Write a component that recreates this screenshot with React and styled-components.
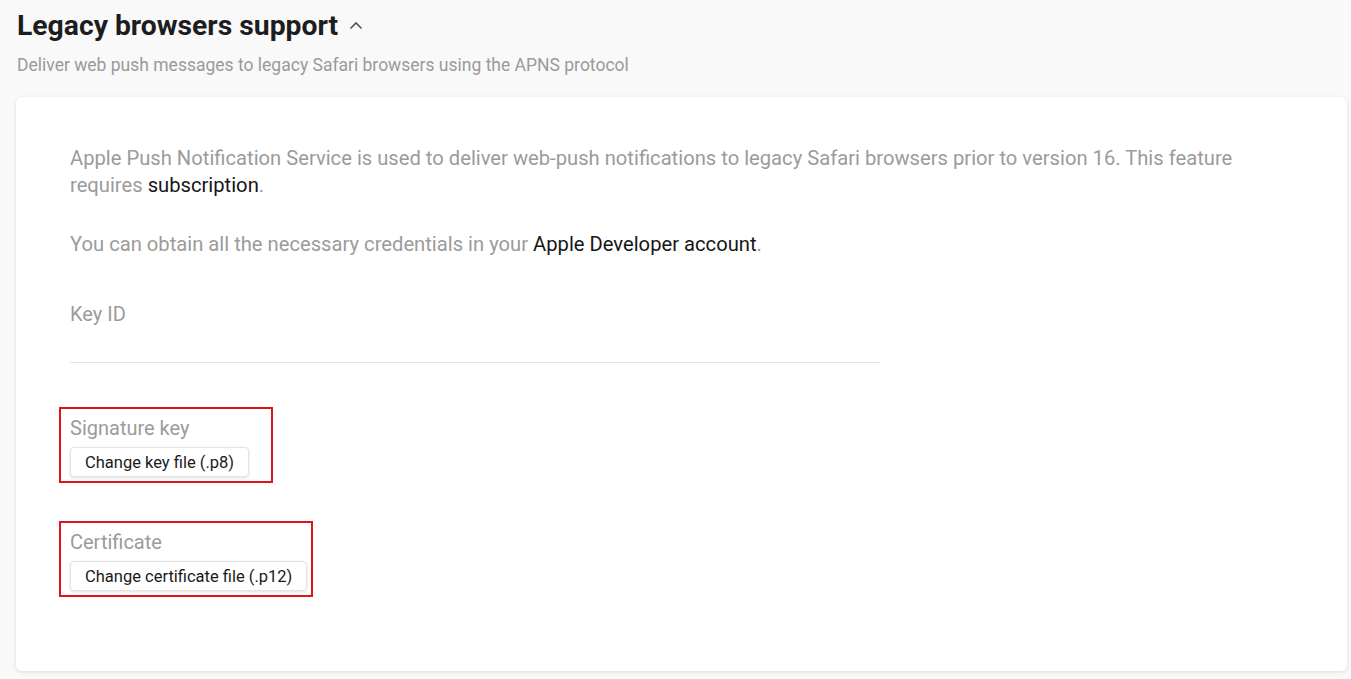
import styled, { createGlobalStyle } from 'styled-components';

const GlobalStyle = createGlobalStyle`
    body {
        margin: 0;
        background: #f9f9f9;
        font-family: Roboto, "Noto Sans", sans-serif;
    }
`

const Page = styled.div`
    padding: 10px 4px 8px 16px;
`

const Header = styled.div`
    display: flex;
    align-items: center;
    gap: 10px;
    padding-left: 1px;
`

const Title = styled.h1`
    margin: 0;
    font-size: 28.3px;
    line-height: 32px;
    font-weight: 700;
    color: #1d1d1f;
`

const Subtitle = styled.p`
    margin: 12px 0 0 1px;
    font-size: 17.5px;
    line-height: 22px;
    color: #9a9a9a;
`

const Card = styled.div`
    margin-top: 21px;
    background: #fff;
    border-radius: 6px;
    box-shadow: 0 1px 4px rgba(0, 0, 0, 0.12);
    padding: 48px 54px 74px 54px;
`

const Text = styled.p`
    margin: 0 0 32px 0;
    max-width: 1180px;
    font-size: 20.2px;
    line-height: 27px;
    color: #9b9b9b;
`

const Link = styled.span`
    color: #161616;
`

const Field = styled.div`
    width: 810px;
    margin-top: 44px;
`

const Label = styled.div`
    font-size: 20px;
    line-height: 24px;
    color: #9b9b9b;
`

const Input = styled.div`
    height: 36px;
    border-bottom: 1px solid #e2e2e2;
`

const Marked = styled.div`
    display: inline-flex;
    flex-direction: column;
    align-items: flex-start;
    gap: 7px;
    margin: ${p => p.$top}px 0 0 -11px;
    padding: 7px ${p => p.$right}px 4px 9px;
    border: 2px solid #e0131a;
`

const FileButton = styled.button`
    font-family: Roboto, "Noto Sans", sans-serif;
    font-size: 16.5px;
    color: #1a1a1a;
    background: #fff;
    border: 1px solid #e4e4e4;
    border-radius: 4px;
    box-shadow: 0 1px 3px rgba(0, 0, 0, 0.12);
    height: 30px;
    padding: 0 14px;
`

const Column = styled.div`
    display: flex;
    flex-direction: column;
    align-items: flex-start;
`

function Chevron() {
    return (
        <svg width="16" height="16" viewBox="0 0 16 16" fill="none">
            <path d="M2.5 10.5 L8 5 L13.5 10.5" stroke="#555" strokeWidth="1.6" />
        </svg>
    )
}

export default function App() {
    return (
        <Page>
            <GlobalStyle />
            <Header>
                <Title>Legacy browsers support</Title>
                <Chevron />
            </Header>
            <Subtitle>Deliver web push messages to legacy Safari browsers using the APNS protocol</Subtitle>
            <Card>
                <Text>
                    Apple Push Notification Service is used to deliver web-push notifications to legacy Safari browsers prior to version 16. This feature requires <Link>subscription</Link>.
                </Text>
                <Text>
                    You can obtain all the necessary credentials in your <Link>Apple Developer account</Link>.
                </Text>
                <Field>
                    <Label>Key ID</Label>
                    <Input />
                </Field>
                <Column>
                    <Marked $top={44} $right={22}>
                        <Label>Signature key</Label>
                        <FileButton>Change key file (.p8)</FileButton>
                    </Marked>
                    <Marked $top={38} $right={4}>
                        <Label>Certificate</Label>
                        <FileButton>Change certificate file (.p12)</FileButton>
                    </Marked>
                </Column>
            </Card>
        </Page>
    )
}
